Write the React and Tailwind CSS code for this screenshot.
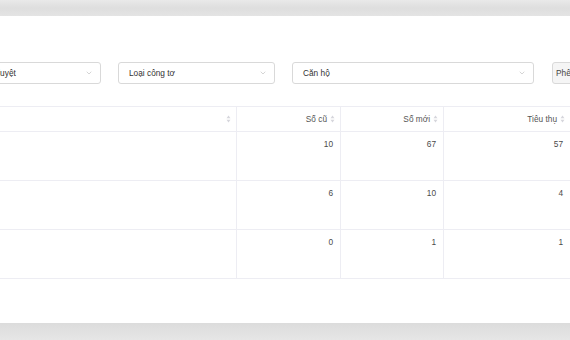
import { ChevronDown } from 'lucide-react'

const COLS = [
  { key: 'name', label: '' },
  { key: 'old', label: 'Số cũ' },
  { key: 'new', label: 'Số mới' },
  { key: 'used', label: 'Tiêu thụ' },
]

const ROWS = [
  { old: 10, new: 67, used: 57 },
  { old: 6, new: 10, used: 4 },
  { old: 0, new: 1, used: 1 },
]

function SortIcon() {
  return (
    <svg width="5" height="8" viewBox="0 0 5 8" className="shrink-0">
      <path d="M2.5 0.5 L4.5 3.2 L0.5 3.2 Z" fill="#d6d6dc" />
      <path d="M2.5 7.5 L4.5 4.8 L0.5 4.8 Z" fill="#d6d6dc" />
    </svg>
  )
}

function Select({ label, className }) {
  return (
    <div className={`h-[22px] shrink-0 flex items-center justify-between rounded-[3px] border border-[#d9d9d9] bg-white pl-[10px] pr-[7px] text-[8.3px] text-[#333] ${className}`}>
      <span className="whitespace-nowrap">{label}</span>
      <ChevronDown size={8} strokeWidth={1.6} className="text-[#b0b0b0] shrink-0" />
    </div>
  )
}

export default function App() {
  return (
    <div className="w-[570px] h-[340px] overflow-hidden bg-[#e5e5e5] font-['Liberation_Sans',Arial,sans-serif]">
      <div className="h-4 bg-gradient-to-b from-[#e9e9e9] via-[#dedede] to-[#e4e4e4]" />

      <div className="h-[307px] bg-white overflow-hidden">
        {/* Filters */}
        <div className="flex gap-[17px] pt-[46px]">
          <Select label="Trạng thái phê duyệt" className="w-[172px] -ml-[71px]" />
          <Select label="Loại công tơ" className="w-[157px]" />
          <Select label="Căn hộ" className="w-[242px]" />
          <div className="h-[22px] w-[80px] shrink-0 ml-px flex items-center rounded-[3px] border border-[#d9d9d9] bg-[#f5f5f5] pl-[3px] text-[8.3px] text-[#444] whitespace-nowrap">
            Phê duyệt
          </div>
        </div>

        {/* Table */}
        <div className="mt-[22px] text-[8.3px]">
          <div className="grid grid-cols-[236px_104px_103px_1fr] h-[26px] border-y border-[#ededf3] text-[#555]">
            {COLS.map((c, i) => (
              <div
                key={c.key}
                className={`flex items-center justify-end gap-[3px] pr-[5px] ${i > 0 ? 'border-l border-[#ededf3]' : ''}`}
              >
                {c.label && <span>{c.label}</span>}
                <SortIcon />
              </div>
            ))}
          </div>

          {ROWS.map((r, idx) => (
            <div key={idx} className="grid grid-cols-[236px_104px_103px_1fr] h-[49px] border-b border-[#ededf3] text-[#4a4a4a]">
              <div />
              {['old', 'new', 'used'].map(k => (
                <div key={k} className="border-l border-[#ededf3] pt-[6px] pr-[7px] text-right">
                  {r[k]}
                </div>
              ))}
            </div>
          ))}
        </div>
      </div>

      <div className="h-[17px] bg-gradient-to-b from-[#dcdcdc] to-[#e6e6e6]" />
    </div>
  )
}
